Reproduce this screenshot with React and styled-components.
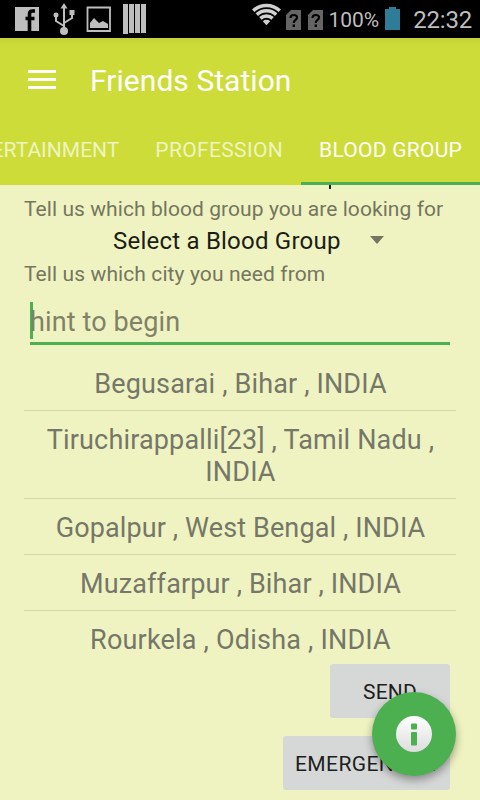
import styled, { createGlobalStyle } from "styled-components";

const GlobalStyle = createGlobalStyle`
    * {
        box-sizing: border-box;
    }
    body {
        margin: 0px;
        font-family: Roboto, sans-serif;
        overflow: hidden;
    }
`;

const Screen = styled.div`
    position: relative;
    display: flex;
    flex-direction: column;
    width: 480px;
    height: 800px;
    overflow: hidden;
    background-color: #EFF3C1;
`;

const StatusBar = styled.div`
    display: flex;
    align-items: center;
    justify-content: space-between;
    height: 38px;
    background-color: #000000;
    color: #BEBEBE;
    svg {
        display: block;
    }
`;

const StatusLeft = styled.div`
    display: flex;
    align-items: center;
    padding-left: 15px;
`;

const StatusRight = styled.div`
    display: flex;
    align-items: center;
    padding-right: 8px;
`;

const Text = styled.span`
    display: block;
    white-space: nowrap;
    font-size: ${({ size }) => size}px;
    letter-spacing: ${({ spacing }) => spacing || 0}px;
`;

const StatusText = styled(Text)`
    padding-top: 2px;
`;

const Toolbar = styled.div`
    display: flex;
    align-items: center;
    gap: 34px;
    height: 84px;
    padding-left: 28px;
    background: linear-gradient(#C6D236, #CDDC39 8px);
    color: #FFFFFF;
`;

const MenuButton = styled.div`
    display: flex;
    flex-direction: column;
    gap: 5px;
    width: 28px;
    margin-top: -1px;
    span {
        height: 3px;
        background-color: #FFFFFF;
    }
`;

const Tabs = styled.div`
    display: flex;
    justify-content: flex-end;
    height: 63px;
    background-color: #CDDC39;
`;

const Tab = styled.div`
    flex: none;
    padding: 0px 18px;
    line-height: 56px;
    color: ${({ active }) => (active ? "#FFFFFF" : "rgba(255,255,255,0.7)")};
    border-bottom: 3px solid ${({ active }) => (active ? "#4CAF50" : "transparent")};
`;

const Content = styled.div`
    flex: 1;
    display: flex;
    flex-direction: column;
    padding: 0px 24px;
    overflow: hidden;
`;

/* what is left of the scrolled heading */
const HeadingTail = styled.div`
    flex: none;
    width: 2px;
    height: 4px;
    margin-left: 305px;
    background-color: #1C1D17;
`;

const Label = styled.div`
    flex: none;
    height: ${({ height }) => height}px;
    line-height: ${({ height }) => height}px;
    color: #74765E;
`;

const Spinner = styled.div`
    display: flex;
    align-items: center;
    flex: none;
    height: 24px;
    padding-left: 89px;
    gap: 29px;
    color: #1C1D17;
`;

const Arrow = styled.div`
    border: 7px solid transparent;
    border-top: 8px solid #74765E;
    border-bottom: 0px;
    margin-top: -2px;
`;

const Field = styled.div`
    display: flex;
    align-items: center;
    flex: none;
    height: 43px;
    margin: 6px 6px 0px;
    border-bottom: 3px solid #4CAF50;
    color: #808267;
`;

const Caret = styled.div`
    width: 3px;
    height: 37px;
    margin: -3px -3px 0px 0px;
    background-color: #4CAF50;
`;

const CityList = styled.div`
    flex: none;
    height: 309px;
    margin-top: 10px;
    overflow: hidden;
`;

const City = styled.div`
    display: flex;
    flex-direction: column;
    align-items: center;
    padding: 13px 0px 10px 1px;
    line-height: 32px;
    color: #757768;
    border-bottom: 1px solid #D3D8AB;
`;

const Actions = styled.div`
    display: flex;
    flex-direction: column;
    align-items: flex-end;
    gap: 18px;
    padding-right: 6px;
`;

const Button = styled.div`
    flex: none;
    width: ${({ width }) => width}px;
    height: 54px;
    padding-left: ${({ pad }) => pad}px;
    line-height: 56px;
    border-radius: 3px;
    background-color: #D6D8D7;
    color: #1D1E1E;
`;

const Fab = styled.div`
    position: absolute;
    right: 24px;
    bottom: 24px;
    display: flex;
    align-items: center;
    justify-content: center;
    width: 84px;
    height: 84px;
    border-radius: 50%;
    background-color: #4CAF50;
    box-shadow: 0px 4px 9px rgba(0,0,0,0.36);
`;

const cities = [
    { lines: ["Begusarai , Bihar , INDIA"], spacing: 0.15 },
    { lines: ["Tiruchirappalli[23] , Tamil Nadu ,", "INDIA"], spacing: 0.16 },
    { lines: ["Gopalpur , West Bengal , INDIA"], spacing: 0.12 },
    { lines: ["Muzaffarpur , Bihar , INDIA"], spacing: 0.13 },
    { lines: ["Rourkela , Odisha , INDIA"], spacing: 0.2 },
];

function LeftIcons() {
    return (
        <svg width="134" height="38" viewBox="15 0 134 38" fill="#BEBEBE">
            <path d="M15 7H39V31H15Z" />
            <path d="M35 11H32.500Q29.500 11 29.500 14V31M25.500 18.500H34.500" fill="none" stroke="#000000" strokeWidth="3.600" />
            <g stroke="#BEBEBE" strokeWidth="2" fill="none">
                <path d="M64 31V8M64 26L56 21V15M64 23L72 18V12" />
            </g>
            <circle cx="64" cy="31" r="4" />
            <circle cx="56" cy="15" r="2.5" />
            <path d="M60.500 8.500L64 3L67.500 8.500ZM69.500 10H74.500V15H69.500Z" />
            <path d="M87.500 7.500H110V31H87.500Z" fill="none" stroke="#BEBEBE" strokeWidth="1.800" />
            <path d="M90 28V23L94 18L99 23L103 21L108 24V28Z" />
            <path d="M123 4H128V34H123ZM129 4H134V33H129ZM135 4H140V33H135ZM141 4H146V33H141Z" />
        </svg>
    );
}

function Sim({ width }) {
    return (
        <svg width={width} height="38" viewBox={`0 0 ${width} 38`}>
            <path d="M0 15L5 10H15V30H0Z" fill="#656565" />
            <path d="M4.500 18Q4.500 15 7.800 15Q11 15 11 17.500Q11 19 9 20.300Q7.800 21.200 7.800 23" fill="none" stroke="#000000" strokeWidth="2.200" />
            <path d="M6.600 24.500H9V27H6.600Z" />
        </svg>
    );
}

function Wifi() {
    return (
        <svg width="34" height="38" viewBox="0 0 34 38" fill="none" stroke="#D0D0D0" strokeWidth="3.600">
            <path d="M1.200 10.800A19.500 19.500 0 0 1 27.800 10.800M4.800 14.600A14.200 14.200 0 0 1 24.200 14.600M8.400 18.400A9 9 0 0 1 20.600 18.400" />
            <path d="M10.800 21.200A5.400 5.400 0 0 1 18.200 21.200L14.500 25.300Z" fill="#D0D0D0" stroke="none" />
        </svg>
    );
}

function App() {
    return (
        <Screen>
            <GlobalStyle />
            <StatusBar>
                <StatusLeft>
                    <LeftIcons />
                </StatusLeft>
                <StatusRight>
                    <Wifi />
                    <Sim width={22} />
                    <Sim width={20} />
                    <StatusText size={21}>100%</StatusText>
                    <svg width="34" height="38" viewBox="0 0 34 38">
                        <path d="M6 9H10V7H17V9H21V30H6Z" fill="#2F7C99" />
                    </svg>
                    <StatusText size={24} spacing={-0.2}>22:32</StatusText>
                </StatusRight>
            </StatusBar>
            <Toolbar>
                <MenuButton>
                    <span />
                    <span />
                    <span />
                </MenuButton>
                <Text size={30} spacing={0.05}>Friends Station</Text>
            </Toolbar>
            <Tabs>
                <Tab><Text size={21}>ENTERTAINMENT</Text></Tab>
                <Tab><Text size={21} spacing={0.35}>PROFESSION</Text></Tab>
                <Tab active="true"><Text size={21} spacing={0.25}>BLOOD GROUP</Text></Tab>
            </Tabs>
            <Content>
                <HeadingTail />
                <Label height={40}><Text size={21} spacing={0.07}>Tell us which blood group you are looking for</Text></Label>
                <Spinner>
                    <Text size={24} spacing={0.22}>Select a Blood Group</Text>
                    <Arrow />
                </Spinner>
                <Label height={43}><Text size={21} spacing={0.1}>Tell us which city you need from</Text></Label>
                <Field>
                    <Caret />
                    <Text size={27} spacing={0.12}>hint to begin</Text>
                </Field>
                <CityList>
                    {cities.map(({ lines, spacing }) => (
                        <City key={lines[0]}>
                            {lines.map((line) => <Text key={line} size={27} spacing={spacing}>{line}</Text>)}
                        </City>
                    ))}
                </CityList>
                <Actions>
                    <Button width={120} pad={33}><Text size={21} spacing={0.2}>SEND</Text></Button>
                    <Button width={167} pad={12}><Text size={21} spacing={0.4}>EMERGENCY...</Text></Button>
                </Actions>
            </Content>
            <Fab>
                <svg width="36" height="36" viewBox="0 0 36 36">
                    <defs>
                        <linearGradient id="shine" x2="0" y2="1">
                            <stop offset="0" stopColor="#FFFFFF" />
                            <stop offset="1" stopColor="#DDDDDD" />
                        </linearGradient>
                    </defs>
                    <circle cx="18" cy="18" r="18" fill="url(#shine)" />
                    <rect x="15" y="7.500" width="6" height="6" rx="1" fill="#4CAF50" />
                    <rect x="15" y="16" width="6" height="13.500" rx="1" fill="#4CAF50" />
                </svg>
            </Fab>
        </Screen>
    );
}

export default App;
